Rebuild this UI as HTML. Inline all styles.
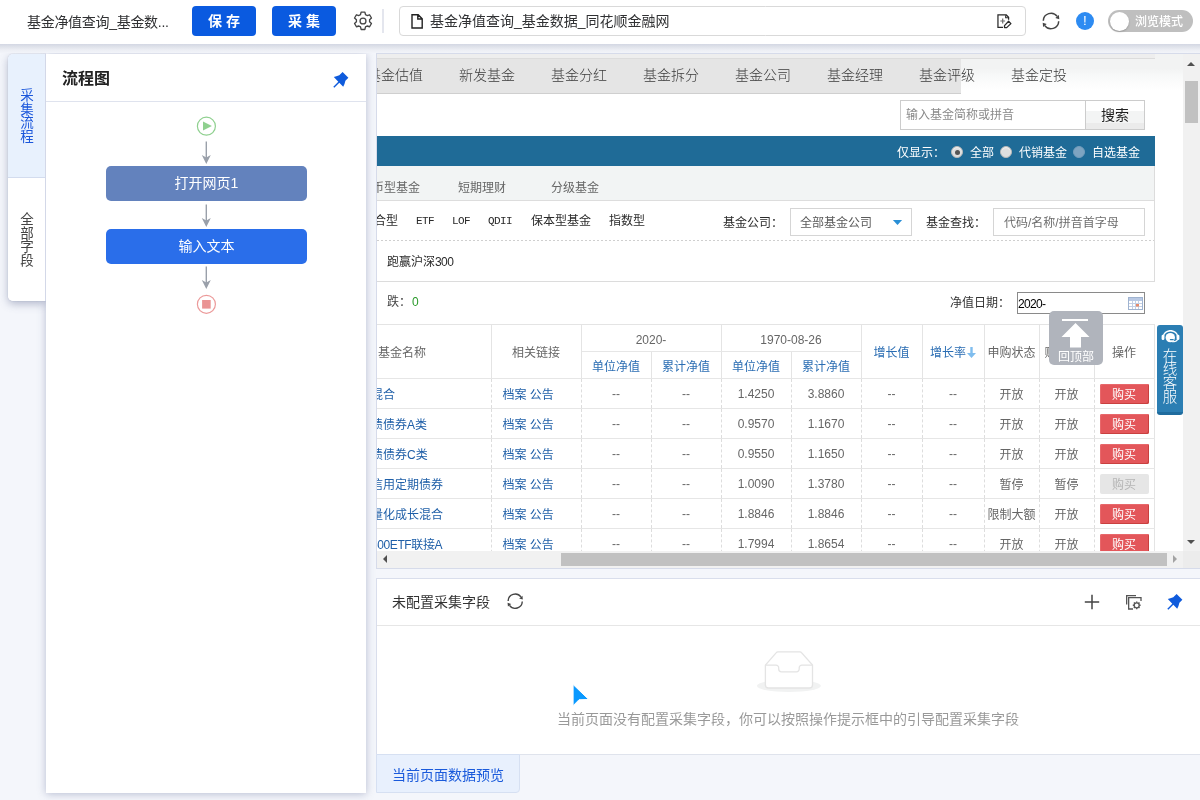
<!DOCTYPE html>
<html lang="zh-CN">
<head>
<meta charset="utf-8">
<title>基金净值查询_基金数据_同花顺金融网</title>
<style>
*{box-sizing:border-box;margin:0;padding:0}
html,body{width:1200px;height:800px;overflow:hidden}
#top,#panel,#sidetabswrap,#view,#bot,#btab{will-change:transform}
body{position:relative;background:#f4f6fb;font-family:"Liberation Sans","Noto Sans CJK SC",sans-serif;font-size:14px;color:#333}
.abs{position:absolute}
/* ---------- top bar ---------- */
#top{position:absolute;left:0;top:0;width:1200px;height:44px;background:#fff;z-index:30}
#top .title{position:absolute;left:27px;top:0;height:44px;line-height:45px;font-size:14px;color:#303133;white-space:nowrap;letter-spacing:-.3px}
.btn{position:absolute;top:6px;width:64px;height:30px;border-radius:4px;background:#0a5ae0;color:#fff;font-size:14px;font-weight:700;line-height:30px;text-align:center;letter-spacing:4px;padding-left:4px}
#url{position:absolute;left:399px;top:6px;width:627px;height:30px;border:1px solid #d9d9d9;border-radius:4px;background:#fff}
#url .t{position:absolute;left:30px;top:0;line-height:29px;font-size:14px;color:#303133;white-space:nowrap}
#toggle{position:absolute;left:1108px;top:10px;width:85px;height:22px;border-radius:11px;background:#bfbfbf}
#toggle i{position:absolute;left:1.5px;top:1.5px;width:19px;height:19px;border-radius:50%;background:#fff;box-shadow:0 1px 2px rgba(0,0,0,.2)}
#toggle span{position:absolute;left:27px;top:1px;line-height:22px;font-size:12px;color:#fff;white-space:nowrap;font-weight:500}
/* ---------- left panel ---------- */
#sidetabswrap{position:absolute;left:0;top:44px;width:46px;height:300px;overflow:hidden;z-index:7}
#sidetabs{position:absolute;left:8px;top:10px;width:38px;height:247px;border-radius:5px 0 0 5px;background:#fff;box-shadow:0 3px 9px rgba(90,100,140,.42),0 0 1px rgba(90,100,140,.5);border-right:1px solid #d3d8e8}
#sidetabs>div{overflow:hidden}
#sidetabs .t1{position:absolute;left:0;top:0;width:37px;height:124px;background:#e8f1fd;border-bottom:1px solid #d3dcee;border-radius:5px 0 0 0}
#sidetabs .t2{position:absolute;left:0;top:124px;width:37px;height:123px;background:#fff;border-radius:0 0 0 5px}
.vtxt{position:absolute;left:12px;width:14px;font-size:13.500px;line-height:13.600px;text-align:center;word-break:break-all}
#panel{position:absolute;left:46px;top:54px;width:320px;height:739px;background:#fff;box-shadow:0 1px 8px rgba(110,120,160,.45);z-index:6}
#panel .hd{position:absolute;left:0;top:0;width:320px;height:48px;border-bottom:1px solid #dfe3ee}
#panel .hd b{position:absolute;left:16px;top:0;line-height:49px;font-size:16px;font-weight:700;color:#222}
.node{position:absolute;left:60px;width:201px;height:35px;border-radius:5px;color:#fff;font-size:14px;line-height:34px;text-align:center}
/* ---------- browser viewport ---------- */
#view{position:absolute;left:377px;top:54px;width:823px;height:514px;background:#fff;overflow:hidden;z-index:2;box-shadow:0 0 0 1px #d6dbea}
#pg{position:absolute;left:0;top:0;width:778px;height:497px;background:#fff;overflow:hidden;font-size:12px;color:#2a2a2a;font-weight:400}
#pg .s{position:absolute;white-space:nowrap;line-height:14px}
.song{font-family:"Liberation Sans","Noto Sans CJK SC",sans-serif}
.mono{font-family:"Liberation Mono","Noto Sans CJK SC",monospace;font-size:11px;letter-spacing:-0.6px}
#pg .nav{font-size:14px;line-height:20px;color:#3a3a3a;font-weight:300}
.radio{width:12px;height:12px;border-radius:50%;background:#dfdfdf;border:1px solid #b9b9b9;box-shadow:inset 0 1px 1px #f4f4f4}
.radio i{position:absolute;left:2.500px;top:2.500px;width:5px;height:5px;border-radius:50%;background:#555}
/* table */
#tb{position:absolute;left:-7px;top:270px;width:784px;border-collapse:collapse;table-layout:fixed;font-size:12px;color:#666;font-weight:400}
#tb td,#tb th{height:30px;border-bottom:1px solid #e6e6e6;border-right:1px dashed #ddd;text-align:center;font-weight:400;padding:0;white-space:nowrap;overflow:hidden}
#tb th{border-right:1px solid #e4e4e4;border-top:1px solid #e4e4e4;color:#666}
#tb th.h1{height:27px;padding-top:3px}
#tb th.h2{height:27px;color:#2a6db3}
#tb th.bl{color:#2a6db3}
#tb td.l{text-align:left;color:#1f5fa8;padding-left:1px}
#tb td.a{color:#1f5fa8;text-align:left;padding-left:11px}
#tb td:last-child{border-right:1px solid #e4e4e4}
.buy{display:inline-block;width:49px;height:20px;line-height:22px;background:#e3565a;border-radius:2px;color:#fff;font-size:12px;vertical-align:middle;box-shadow:inset -1px -1px 0 #c9403f,inset 1px 1px 0 #e8686b}
.buy.off{background:#e6e6e6;color:#b5b5b5;box-shadow:none}
/* bottom panel */
#bot{position:absolute;left:376px;top:578px;width:824px;height:177px;background:#fff;border-top:1px solid #d9deec;border-left:1px solid #d9deec;z-index:2}
</style>
</head>
<body>

<!-- ================= TOP BAR ================= -->
<div id="top">
  <div class="title">基金净值查询_基金数...</div>
  <div class="btn" style="left:192px">保存</div>
  <div class="btn" style="left:272px">采集</div>
  <svg class="abs" style="left:352px;top:10px" width="22" height="22" viewBox="0 0 1024 1024"><path fill="none" stroke="#444" stroke-width="62" stroke-linejoin="round" d="M424 96h176l28 118 74 43 116-35 88 152-88 84v86l88 84-88 152-116-35-74 43-28 118H424l-28-118-74-43-116 35-88-152 88-84v-86l-88-84 88-152 116 35 74-43z"/><circle cx="512" cy="512" r="138" fill="none" stroke="#444" stroke-width="60"/></svg>
  <div class="abs" style="left:382px;top:9px;width:1.500px;height:24px;background:#e4e6ee"></div>
  <div id="url">
    <svg class="abs" style="left:11px;top:7px" width="14" height="15" viewBox="0 0 14 15"><path d="M1 .7h6.200l4 4v9.300H1z M6.800 .7v4.300h4.400" fill="none" stroke="#222" stroke-width="1.400" stroke-linejoin="miter"/></svg>
    <div class="t">基金净值查询_基金数据_同花顺金融网</div>
    <svg class="abs" style="left:597px;top:7px" width="16" height="16" viewBox="0 0 16 16"><path d="M6 13.400H.95V.95H9.300L11.600 3.200V5.700" fill="none" stroke="#2a2a2a" stroke-width="1.250"/><path d="M8.700 1.200V3.700H11.300" fill="none" stroke="#2a2a2a" stroke-width="1.100"/><path d="M3.300 7h4.800M5.700 4.600v4.800" stroke="#6a6a6a" stroke-width="1.200" fill="none"/><path d="M11.600 7.300L13.900 9.600 9.700 13.600 7.500 13.500 7.500 11.600z" fill="#fff" stroke="#2a2a2a" stroke-width="1.300" stroke-linejoin="round"/></svg>
  </div>
  <svg class="abs" style="left:1041px;top:10.800px" width="20" height="20" viewBox="-10 -10 20 20"><g fill="none" stroke="#444" stroke-width="1.500"><path d="M-7.700 -.3A7.700 7.700 0 0 1 6.200 -4.600"/><path d="M7.700 .3A7.700 7.700 0 0 1 -6.200 4.600"/></g><path d="M4.300 -3L7.900 -5.900 8.300 -1.800zM-4.300 3L-7.900 5.900 -8.300 1.800z" fill="#444"/></svg>
  <div class="abs" style="left:1076px;top:12px;width:18px;height:18px;border-radius:50%;background:#2d8bf2"></div>
  <div class="abs" style="left:1076px;top:12px;width:18px;height:18px;line-height:18px;text-align:center;color:#fff;font-weight:400;font-size:13.500px">!</div>
  <div id="toggle"><i></i><span>浏览模式</span></div>
</div>

<div class="abs" style="left:0;top:44px;width:1200px;height:9px;background:linear-gradient(#d3d7e3 0,#dfe2ea 30%,#eceef4 65%,#f2f4f9 100%);z-index:29"></div>
<!-- ================= LEFT PANEL ================= -->
<div id="sidetabswrap"><div id="sidetabs">
  <div class="t1"><div class="vtxt" style="top:35px;color:#1a56db">采集流程</div></div>
  <div class="t2"><div class="vtxt" style="top:35px;color:#444">全部字段</div></div>
</div></div>
<div id="panel">
  <div class="hd"><b>流程图</b>
    <svg class="abs" style="left:287px;top:18px" width="16" height="16" viewBox="0 0 16 16"><path d="M9.600 0L15.400 5.800 12.400 8.800 11.500 12 10.200 14.800 6.300 10.800 1.300 15.800.3 14.800 5.300 9.800.8 5.100 3.300 4.200 6.300 3.300z" fill="#0f5bdc"/></svg>
  </div>
  <svg class="abs" style="left:0;top:48px" width="321" height="280" viewBox="0 0 321 280">
    <circle cx="160.400" cy="24.200" r="9" fill="#fff" stroke="#8fd08f" stroke-width="1.200"/>
    <path d="M157 19.600L165.900 24 157 28.400z" fill="#8fd08f"/>
    <g stroke="#9aa0aa" stroke-width="1.400" fill="#9aa0aa">
      <path d="M160.300 39.500v20" fill="none"/><path d="M160.300 62l-4.500-9 4.500 2.500 4.500-2.500z" stroke="none"/>
      <path d="M160.300 102.500v20" fill="none"/><path d="M160.300 125l-4.500-9 4.500 2.500 4.500-2.500z" stroke="none"/>
      <path d="M160.300 164.500v20" fill="none"/><path d="M160.300 187l-4.500-9 4.500 2.500 4.500-2.500z" stroke="none"/>
    </g>
    <circle cx="160.400" cy="202.300" r="9" fill="#fff" stroke="#ec9a9a" stroke-width="1.200"/>
    <rect x="156.100" y="198" width="8.600" height="8.600" fill="#ea9494"/>
  </svg>
  <div class="node" style="top:112px;background:#6382bd">打开网页1</div>
  <div class="node" style="top:175px;background:#2a6eea">输入文本</div>
</div>

<!-- ================= BROWSER VIEWPORT ================= -->
<div id="view">
  <div id="pg">
    <!-- top thin strip + nav tabs -->
    <div class="abs" style="left:0;top:0;width:778px;height:5px;background:#eeeeee;border-bottom:1px solid #dcdcdc"></div>
    <div class="abs" style="left:0;top:5px;width:584px;height:35px;background:#e5e5e5"></div>
    <div class="abs" style="left:584px;top:5px;width:194px;height:35px;background:linear-gradient(#f2f3f3 0,#f2f3f3 26%,#f7f8f8 45%,#fcfcfc 70%,#fff 90%)"></div>
    <div class="abs" style="left:0;top:39px;width:584px;height:1px;background:#cfcfcf"></div>
    <div class="s nav" style="left:-10px;top:11px">基金估值</div>
    <div class="s nav" style="left:82px;top:11px">新发基金</div>
    <div class="s nav" style="left:174px;top:11px">基金分红</div>
    <div class="s nav" style="left:266px;top:11px">基金拆分</div>
    <div class="s nav" style="left:358px;top:11px">基金公司</div>
    <div class="s nav" style="left:450px;top:11px">基金经理</div>
    <div class="s nav" style="left:542px;top:11px">基金评级</div>
    <div class="s nav" style="left:634px;top:11px">基金定投</div>
    <!-- search -->
    <div class="abs" style="left:523px;top:46px;width:186px;height:30px;border:1px solid #ccc;background:#fff"></div>
    <div class="s" style="left:529px;top:54px;color:#8a8a8a">输入基金简称或拼音</div>
    <div class="abs" style="left:708px;top:46px;width:60px;height:30px;border:1px solid #ccc;background:linear-gradient(#fff 0,#fff 36%,#f3f4f4 36%,#f3f4f4 79%,#ebebeb 79%,#ebebeb 100%)"></div>
    <div class="s" style="left:724px;top:53px;font-size:14px;line-height:16px;color:#222">搜索</div>
    <!-- blue bar -->
    <div class="abs" style="left:0;top:82px;width:778px;height:30px;background:#1f6b97"></div>
    <div class="s" style="left:520px;top:92px;color:#fff;font-weight:400">仅显示：</div>
    <div class="abs radio" style="left:574px;top:92px"><i></i></div>
    <div class="s" style="left:593px;top:92px;color:#fff;font-weight:400">全部</div>
    <div class="abs radio" style="left:623px;top:92px"></div>
    <div class="s" style="left:642px;top:92px;color:#fff;font-weight:400">代销基金</div>
    <div class="abs radio" style="left:695.500px;top:92px;background:#7ea4c1;border-color:#739dbc;box-shadow:none"></div>
    <div class="s" style="left:715px;top:92px;color:#fff;font-weight:400">自选基金</div>
    <!-- sub tabs -->
    <div class="abs" style="left:0;top:112px;width:778px;height:35px;background:#f2f4f4;border-bottom:1px solid #dddddd;border-right:1px solid #dcdcdc"></div>
    <div class="s" style="left:-17px;top:127px;color:#666">货币型基金</div>
    <div class="s" style="left:81px;top:127px;color:#666">短期理财</div>
    <div class="s" style="left:174px;top:127px;color:#666">分级基金</div>
    <!-- filter box -->
    <div class="abs" style="left:-2px;top:147px;width:780px;height:81px;border:1px solid #dcdcdc;border-top:0;background:#fff"></div>
    <div class="abs" style="left:0;top:186px;width:777px;height:1px;background:repeating-linear-gradient(90deg,#cfcfcf 0,#cfcfcf 2px,transparent 2px,transparent 4px)"></div>
    <div class="s" style="left:-3px;top:160px">合型</div>
    <div class="s mono" style="left:39px;top:160px">ETF</div>
    <div class="s mono" style="left:75px;top:160px">LOF</div>
    <div class="s mono" style="left:111px;top:160px">QDII</div>
    <div class="s" style="left:154px;top:160px">保本型基金</div>
    <div class="s" style="left:232px;top:160px">指数型</div>
    <div class="s" style="left:346px;top:162px">基金公司：</div>
    <div class="abs" style="left:413px;top:154px;width:122px;height:28px;border:1px solid #d5d5d5;background:#fff"></div>
    <div class="s" style="left:423px;top:162px;color:#5a5a5a">全部基金公司</div>
    <svg class="abs" style="left:515px;top:165px" width="12" height="8" viewBox="0 0 12 8"><path d="M.9 .9h9.200l-4.600 5.200z" fill="#2a8fd6"/></svg>
    <div class="s" style="left:549px;top:162px">基金查找：</div>
    <div class="abs" style="left:616px;top:154px;width:152px;height:28px;border:1px solid #d5d5d5;background:#fff"></div>
    <div class="s" style="left:627px;top:162px;color:#6e6e6e">代码/名称/拼音首字母</div>
    <div class="s" style="left:10px;top:201px">跑赢沪深<span style="letter-spacing:-.6px">300</span></div>
    <!-- date row -->
    <div class="s" style="left:10px;top:240.500px;color:#444">跌：<span style="color:#2a9a2a;margin-left:1px">0</span></div>
    <div class="s" style="left:573px;top:242px;color:#333">净值日期：</div>
    <div class="abs" style="left:640px;top:238px;width:128px;height:22px;border:1px solid #8a8a8a;background:#fff"></div>
    <div class="s" style="left:641px;top:243px;color:#000;font-size:12px;letter-spacing:-.65px">2020-</div>
    <svg class="abs" style="left:751px;top:242px" width="15" height="14" viewBox="0 0 15 14"><rect x=".5" y="1.500" width="14" height="12" fill="#fff" stroke="#9fb3d0"/><rect x="1" y="2" width="13" height="3" fill="#b9c9e4"/><path d="M1 7.500h13M1 10.500h13M4.500 5v8M7.500 5v8M10.500 5v8" stroke="#c3cfe4" stroke-width="1" fill="none"/><rect x="8" y="8" width="3" height="2.500" fill="#e58a6a"/></svg>
<table id="tb"><colgroup><col style="width:121px"><col style="width:90px"><col style="width:70px"><col style="width:70px"><col style="width:70px"><col style="width:70px"><col style="width:61px"><col style="width:62px"><col style="width:55px"><col style="width:55px"><col style="width:60px"></colgroup>
<tr><th rowspan="2" style="text-align:left;padding-left:8px">基金名称</th><th rowspan="2">相关链接</th><th colspan="2" class="h1">2020-</th><th colspan="2" class="h1">1970-08-26</th><th rowspan="2" class="bl">增长值</th><th rowspan="2" class="bl">增长率<svg width="9" height="11" viewBox="0 0 9 11" style="vertical-align:-1px;margin-left:1px"><path d="M3.300 0h2.400v6H9L4.500 11 0 6h3.300z" fill="#7fbdee"/></svg></th><th rowspan="2">申购状态</th><th rowspan="2" style="text-align:left;padding-left:5px">赎回状态</th><th rowspan="2">操作</th></tr>
<tr><th class="h2">单位净值</th><th class="h2">累计净值</th><th class="h2">单位净值</th><th class="h2">累计净值</th></tr>
<tr><td class="l">混合</td><td class="a">档案 公告</td><td>--</td><td>--</td><td>1.4250</td><td>3.8860</td><td>--</td><td>--</td><td>开放</td><td>开放</td><td><span class="buy">购买</span></td></tr>
<tr><td class="l">债债券A类</td><td class="a">档案 公告</td><td>--</td><td>--</td><td>0.9570</td><td>1.1670</td><td>--</td><td>--</td><td>开放</td><td>开放</td><td><span class="buy">购买</span></td></tr>
<tr><td class="l">债债券C类</td><td class="a">档案 公告</td><td>--</td><td>--</td><td>0.9550</td><td>1.1650</td><td>--</td><td>--</td><td>开放</td><td>开放</td><td><span class="buy">购买</span></td></tr>
<tr><td class="l">信用定期债券</td><td class="a">档案 公告</td><td>--</td><td>--</td><td>1.0090</td><td>1.3780</td><td>--</td><td>--</td><td>暂停</td><td>暂停</td><td><span class="buy off">购买</span></td></tr>
<tr><td class="l">量化成长混合</td><td class="a">档案 公告</td><td>--</td><td>--</td><td>1.8846</td><td>1.8846</td><td>--</td><td>--</td><td>限制大额</td><td>开放</td><td><span class="buy">购买</span></td></tr>
<tr><td class="l" style="letter-spacing:-.4px">500ETF联接A</td><td class="a">档案 公告</td><td>--</td><td>--</td><td>1.7994</td><td>1.8654</td><td>--</td><td>--</td><td>开放</td><td>开放</td><td><span class="buy">购买</span></td></tr>
</table>
  <!--PGEND--></div>
  <div class="abs" style="left:778px;top:0;width:28px;height:40px;background:linear-gradient(#f2f3f3 0,#f2f3f3 36%,#f7f8f8 52%,#fcfcfc 74%,#fff 92%)"></div>
  <!-- floating widgets -->
  <div class="abs" style="left:672px;top:257px;width:54px;height:54px;border-radius:5px;background:#b0b4bc">
    <div class="abs" style="left:13px;top:8px;width:26px;height:2px;background:#fff"></div>
    <svg class="abs" style="left:12px;top:12px" width="29" height="25" viewBox="0 0 29 25"><path d="M14.500 0L28.500 14H20v10.500H9V14H.5z" fill="#fff"/></svg>
    <div class="abs" style="left:0;top:39px;width:54px;text-align:center;font-size:12px;line-height:14px;color:#fff">回顶部</div>
  </div>
  <div class="abs" style="left:780px;top:271px;width:26px;height:90px;background:#2b7eb3;border-bottom:3px solid #1f6c9e;border-radius:3px">
    <svg class="abs" style="left:4px;top:5px" width="19" height="13" viewBox="0 0 19 13"><path d="M2.300 7.500V7a7.200 6.300 0 0 1 14.400 0v.5" fill="none" stroke="#fff" stroke-width="1.500"/><rect x=".6" y="4.800" width="2.800" height="5.200" rx="1.300" fill="#fff"/><rect x="15.600" y="4.800" width="2.800" height="5.200" rx="1.300" fill="#fff"/><circle cx="9.300" cy="7.600" r="4.700" fill="#fff"/><path d="M16.500 9.500c-.6 1.700-2.500 2.300-5.500 2.300" fill="none" stroke="#fff" stroke-width="1.100"/><rect x="8.800" y="8.900" width="4" height="1.300" rx=".6" fill="#2b7eb3"/></svg>
    <div class="abs" style="left:5.500px;top:24.500px;width:15px;font-size:14.500px;line-height:13.700px;color:#fff;word-break:break-all;text-align:center;font-weight:300">在线客服</div>
  </div>
  <!-- scrollbars -->
  <div class="abs" style="left:806px;top:0;width:17px;height:497px;background:#f1f1f1"></div>
  <div class="abs" style="left:808px;top:27px;width:13px;height:42px;background:#c1c1c1"></div>
  <div class="abs" style="left:810px;top:8px;width:0;height:0;border:4px solid transparent;border-bottom:4px solid #505050;border-top:0"></div>
  <div class="abs" style="left:810px;top:486px;width:0;height:0;border:4px solid transparent;border-top:4px solid #505050;border-bottom:0"></div>
  <div class="abs" style="left:0;top:497px;width:806px;height:17px;background:#f1f1f1"></div>
  <div class="abs" style="left:806px;top:497px;width:17px;height:17px;background:#ececec"></div>
  <div class="abs" style="left:184px;top:499px;width:606px;height:13px;background:#c1c1c1"></div>
  <div class="abs" style="left:6px;top:501px;width:0;height:0;border:4px solid transparent;border-right:4px solid #505050;border-left:0"></div>
  <div class="abs" style="left:796px;top:501px;width:0;height:0;border:4px solid transparent;border-left:4px solid #a3a3a3;border-right:0"></div>
</div>

<!-- ================= BOTTOM PANEL ================= -->
<div id="bot">
  <div class="abs" style="left:15px;top:13px;font-size:14px;line-height:20px;color:#333;white-space:nowrap">未配置采集字段</div>
  <svg class="abs" style="left:129.100px;top:12.800px" width="18.400" height="18.400" viewBox="-10 -10 20 20"><g fill="none" stroke="#444" stroke-width="1.500"><path d="M-7.700 -.3A7.700 7.700 0 0 1 6.200 -4.600"/><path d="M7.700 .3A7.700 7.700 0 0 1 -6.200 4.600"/></g><path d="M4.300 -3L7.900 -5.900 8.300 -1.800zM-4.300 3L-7.900 5.900 -8.300 1.800z" fill="#444"/></svg>
  <svg class="abs" style="left:707px;top:15px" width="16" height="16" viewBox="0 0 16 16"><path d="M8 .8v14.400M.8 8h14.400" stroke="#444" stroke-width="1.500" fill="none"/></svg>
  <svg class="abs" style="left:749px;top:16px" width="16" height="15" viewBox="0 0 16 15"><g fill="none" stroke="#555" stroke-width="1.300"><path d="M.65 9.500V.65H10"/><path d="M15 6V2.650H2.650V14H7"/><circle cx="10.700" cy="10.300" r="2.500"/><path d="M10.700 6.400v1.400M10.700 12.800v1.400M6.800 10.300h1.400M13.200 10.300h1.400M7.900 7.500l1 1M12.500 12.100l1 1M13.500 7.500l-1 1M8.900 12.100l-1 1" stroke-width="1.400"/></g></svg>
  <svg class="abs" style="left:790px;top:15.300px" width="16" height="16" viewBox="0 0 16 16"><path d="M9.600 0L15.400 5.800 12.400 8.800 11.500 12 10.200 14.800 6.300 10.800 1.300 15.800.3 14.800 5.300 9.800.8 5.100 3.300 4.200 6.300 3.300z" fill="#0f5bdc"/></svg>
  <div class="abs" style="left:0;top:46px;width:823px;height:1px;background:#e6e6e6"></div>
  <!-- empty state -->
  <svg class="abs" style="left:379px;top:70.500px" width="66" height="44" viewBox="0 0 66 44"><ellipse cx="32.900" cy="35.800" rx="32" ry="6.200" fill="#f1f2f2"/><path d="M9.400 15.100L20.300 2.600a2 2 0 0 1 1.500-.8h22.200a2 2 0 0 1 1.500.8L56.500 15.100v19.900a3 3 0 0 1-3 3H12.400a3 3 0 0 1-3-3z" fill="#fff" stroke="#e4e4e4" stroke-width="1.300"/><path d="M9.400 15.100h10.600a2.700 2.700 0 0 1 2.700 2.700v1.300a2.700 2.700 0 0 0 2.700 2.700h15.100a2.700 2.700 0 0 0 2.700-2.700v-1.300a2.700 2.700 0 0 1 2.700-2.700H56.500" fill="none" stroke="#e4e4e4" stroke-width="1.300"/></svg>
  <div class="abs" style="left:180px;top:129.500px;font-size:14px;line-height:20px;color:#999;white-space:nowrap">当前页面没有配置采集字段，你可以按照操作提示框中的引导配置采集字段</div>
  <svg class="abs" style="left:190px;top:100px" width="30" height="32" viewBox="0 0 30 32"><path d="M6.100 5.500L21.750 20.500 12 20.750 6.100 26.750z" fill="#0a99ff" stroke="#fff" stroke-width="1" stroke-linejoin="round"/></svg>
</div>
<div class="abs" style="left:376px;top:754px;width:824px;height:1px;background:#dfe3ec;z-index:3"></div>
<div id="btab" class="abs" style="left:376px;top:754px;width:144px;height:39px;background:#e8f0fd;border:1px solid #d6e0f2;border-radius:0 0 4px 0;z-index:3"><div class="abs" style="left:15px;top:10px;font-size:14px;line-height:20px;color:#1a5adb;white-space:nowrap">当前页面数据预览</div></div>

</body>
</html>
